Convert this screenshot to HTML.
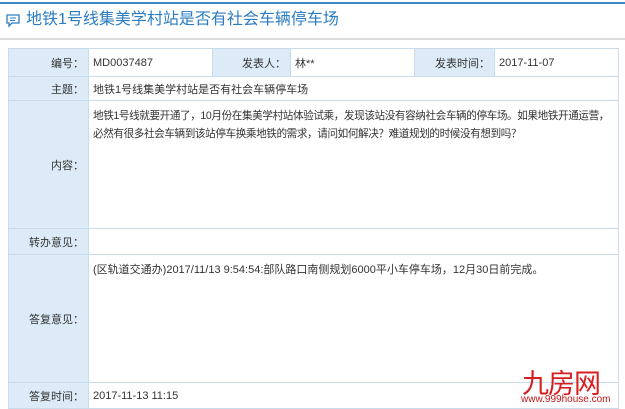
<!DOCTYPE html><html><head><meta charset="utf-8"><style>
body{margin:0;width:625px;height:409px;background:#fff;font-family:"Liberation Sans","Noto Sans CJK SC",sans-serif;font-size:11px;color:#333;overflow:hidden;position:relative}
.top{position:absolute;left:0;top:2px;width:625px;height:2px;background:#3b88c4}
.title{position:absolute;left:26px;top:10px;font-size:16px;color:#2b7cc0;line-height:20px}
.icon{position:absolute;left:5px;top:14px}
.sep{position:absolute;left:0;top:38px;width:625px;height:2px;background:#ddd}
table{position:absolute;left:8px;top:48px;width:611px;border-collapse:collapse;table-layout:fixed}
td{border:1px solid #c9dcec;padding:0 4px;vertical-align:middle;overflow:hidden}
td.l{background:#dcebf7;text-align:right;padding-right:4px}
.c{vertical-align:top;padding-top:6px;line-height:18px;white-space:nowrap;font-size:10.6px;letter-spacing:-0.4px}
.c2{vertical-align:top;padding-top:6px;line-height:18px;white-space:nowrap}
.logo{position:absolute;left:522px;top:362px;color:#d81e1e;font-size:27px;font-weight:normal;letter-spacing:-1px}
.url{position:absolute;left:521px;top:394px;color:#c01818;font-size:10px}
</style></head><body>
<div class="top"></div>
<svg class="icon" width="16" height="14" viewBox="0 0 16 14"><path d="M2 1h12v8H7l-3 3v-3H2z" fill="none" stroke="#2b7cc0" stroke-width="1.3"/><path d="M5 4h6M5 6.5h5" stroke="#2b7cc0"/></svg>
<div class="title">地铁1号线集美学村站是否有社会车辆停车场</div>
<div class="sep"></div>
<table>
<colgroup><col style="width:80px"><col style="width:124px"><col style="width:78px"><col style="width:124px"><col style="width:80px"><col></colgroup>
<tr style="height:28px"><td class="l">编号：</td><td>MD0037487</td><td class="l">发表人：</td><td>林**</td><td class="l">发表时间：</td><td>2017-11-07</td></tr>
<tr style="height:24px"><td class="l">主题：</td><td colspan="5">地铁1号线集美学村站是否有社会车辆停车场</td></tr>
<tr style="height:128px"><td class="l">内容：</td><td colspan="5" class="c">地铁1号线就要开通了，10月份在集美学村站体验试乘，发现该站没有容纳社会车辆的停车场。如果地铁开通运营，<br>必然有很多社会车辆到该站停车换乘地铁的需求，请问如何解决？难道规划的时候没有想到吗？</td></tr>
<tr style="height:26px"><td class="l">转办意见：</td><td colspan="5"></td></tr>
<tr style="height:128px"><td class="l">答复意见：</td><td colspan="5" class="c2">(区轨道交通办)2017/11/13 9:54:54:部队路口南侧规划6000平小车停车场，12月30日前完成。</td></tr>
<tr style="height:26px"><td class="l">答复时间：</td><td colspan="5">2017-11-13 11:15</td></tr>
</table>
<div class="logo">九房网</div>
<div class="url">www.999house.com</div>
</body></html>
